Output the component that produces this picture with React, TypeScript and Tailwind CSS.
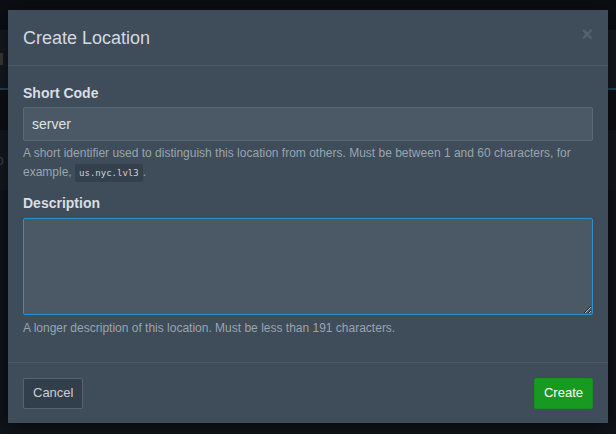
import { useState } from 'react';

export default function App() {
  const [code, setCode] = useState('server');
  const [description, setDescription] = useState('');

  return (
    <div className="relative h-[434px] w-[616px] overflow-hidden bg-[#101418] font-['Liberation_Sans',Arial,sans-serif]">
      {/* dimmed page behind the modal */}
      <div className="flex flex-col">
        <div className="h-[30px] bg-[#0b0e12]" />
        <div className="flex h-[58px] items-center bg-[#15191e]">
          <span className="h-[12px] w-[3px] bg-[#3a3a36]" />
        </div>
        <div className="h-[2px] bg-[#1d4660]" />
        <div className="h-[40px] bg-[#0c0f13]" />
        <div className="flex h-[60px] items-center bg-[#14181d]">
          <span className="-ml-1 text-[14px] text-[#3c4248]">o</span>
        </div>
      </div>

      {/* modal */}
      <div className="absolute left-[8px] top-[10px] flex h-[413px] w-[600px] flex-col bg-[#3f4c59] shadow-[0_4px_20px_rgba(0,0,0,0.5)]">
        <div className="flex h-[56px] items-center justify-between border-b border-[#4c5966] px-[15px]">
          <h2 className="pt-[1px] text-[18px] text-[#d3dae0]">Create Location</h2>
          <button className="-mt-[8px] text-[20px] font-bold leading-none text-[#55626d]">×</button>
        </div>

        <div className="flex flex-1 flex-col px-[15px] pt-[17px]">
          <label className="text-[14px] font-bold text-[#d9dee3]">Short Code</label>
          <input
            value={code}
            onChange={(e) => setCode(e.target.value)}
            className="mt-[3px] h-[34px] w-full rounded-[2px] border border-[#5b6975] bg-[#4b5966] px-[8px] text-[14px] text-[#dfe4e8] outline-none"
          />
          <p className="mt-[3px] text-[12px] leading-[19px] text-[#9aa5af]">
            A short identifier used to distinguish this location from others. Must be between 1 and 60 characters, for
            example,{' '}
            <code className="inline-block rounded-[2px] bg-[#34404c] px-[4px] py-[2px] align-middle font-['DejaVu_Sans_Mono',monospace] text-[9px] leading-[14px] text-[#cdd3d8]">
              us.nyc.lvl3
            </code>
            .
          </p>

          <label className="mt-[11px] text-[14px] font-bold text-[#d9dee3]">Description</label>
          <textarea
            autoFocus
            value={description}
            onChange={(e) => setDescription(e.target.value)}
            className="mt-[4px] h-[97px] w-full resize-y rounded-[2px] border border-[#2f8ecf] bg-[#4b5966] px-[8px] py-[6px] text-[14px] text-[#dfe4e8] caret-[#dfe4e8] outline-none"
          />
          <p className="mt-[4px] text-[12px] leading-[19px] text-[#9aa5af]">
            A longer description of this location. Must be less than 191 characters.
          </p>
        </div>

        <div className="flex h-[61px] items-center justify-between border-t border-[#4c5966] px-[15px]">
          <button className="h-[31px] rounded-[2px] border border-[#58656f] bg-[#323e4a] px-[9px] text-[13px] text-[#c9d0d6]">
            Cancel
          </button>
          <button className="h-[31px] rounded-[2px] border border-[#178f20] bg-[#189a22] px-[9px] text-[13px] text-white">
            Create
          </button>
        </div>
      </div>
    </div>
  );
}
